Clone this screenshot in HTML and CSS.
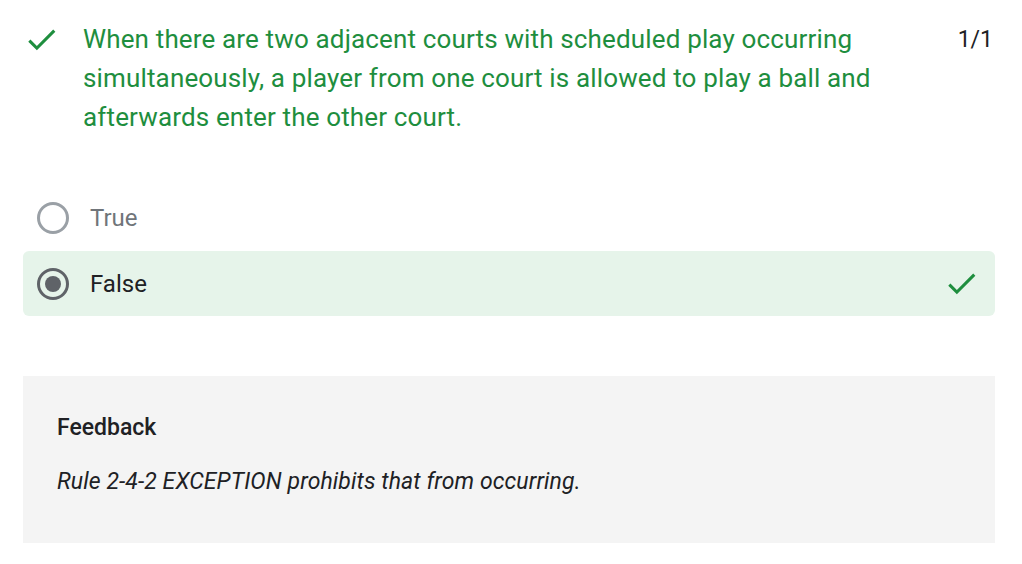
FILE: index.html
```html
<!DOCTYPE html>
<html lang="en">
<head>
<meta charset="utf-8">
<title>Quiz question</title>
<link rel="stylesheet" href="styles.css">
</head>
<body>
<div class="card">
  <div class="header">
    <svg class="check-icon head-check" viewBox="0 0 24 24" width="37" height="37"><path d="M9 16.17L4.83 12l-1.42 1.41L9 19 21 7l-1.41-1.41z"/></svg>
    <div class="title">When there are two adjacent courts with scheduled play occurring simultaneously, a player from one court is allowed to play a ball and afterwards enter the other court.</div>
    <div class="score">1/1</div>
  </div>
  <div class="options">
    <div class="option">
      <span class="radio"></span>
      <span class="label muted">True</span>
    </div>
    <div class="option correct">
      <span class="radio checked"></span>
      <span class="label">False</span>
      <svg class="check-icon row-check" viewBox="0 0 24 24" width="37" height="37"><path d="M9 16.17L4.83 12l-1.42 1.41L9 19 21 7l-1.41-1.41z"/></svg>
    </div>
  </div>
  <div class="feedback">
    <div class="fb-title">Feedback</div>
    <div class="fb-text">Rule 2-4-2 EXCEPTION prohibits that from occurring.</div>
  </div>
</div>
</body>
</html>
```
FILE: styles.css
```css
html, body {
  margin: 0;
  padding: 0;
  background: #ffffff;
}
body {
  font-family: Roboto, "Noto Sans", Arial, sans-serif;
  color: #202124;
}
.card {
  margin-left: 23px;
  width: 972px;
}
.header {
  display: flex;
  align-items: flex-start;
  padding-top: 20px;
}
.check-icon {
  fill: #1e8e3e;
  flex: none;
}
.head-check {
  margin-top: 1px;
  margin-right: 23px;
}
.title {
  flex: 1;
  font-size: 26px;
  line-height: 39px;
  letter-spacing: 0.15px;
  color: #1e8e3e;
  padding-right: 60px;
}
.score {
  flex: none;
  font-size: 23px;
  line-height: 39px;
  color: #202124;
  padding-right: 2px;
}
.options {
  margin-top: 48px;
  display: flex;
  flex-direction: column;
}
.option {
  height: 65px;
  display: flex;
  align-items: center;
  padding-left: 14px;
  padding-right: 15px;
  border-radius: 6px;
}
.option.correct {
  background: #e6f4ea;
  margin-top: 1px;
}
.radio {
  width: 32px;
  height: 32px;
  box-sizing: border-box;
  border: 3px solid #9aa0a6;
  border-radius: 50%;
  flex: none;
  display: flex;
  align-items: center;
  justify-content: center;
}
.radio.checked {
  border-color: #5f6368;
}
.radio.checked::after {
  content: "";
  width: 16px;
  height: 16px;
  border-radius: 50%;
  background: #5f6368;
}
.label {
  margin-left: 21px;
  font-size: 24px;
  color: #202124;
  flex: 1;
}
.label.muted {
  color: #70757a;
}
.row-check {
  margin-top: -1px;
}
.feedback {
  margin-top: 60px;
  background: #f4f4f4;
  padding: 37px 34px 46px;
}
.fb-title {
  font-size: 23px;
  line-height: 30px;
  font-weight: 500;
  color: #202124;
}
.fb-text {
  margin-top: 24px;
  font-size: 23px;
  line-height: 30px;
  letter-spacing: 0.1px;
  font-style: italic;
  color: #202124;
}
```
